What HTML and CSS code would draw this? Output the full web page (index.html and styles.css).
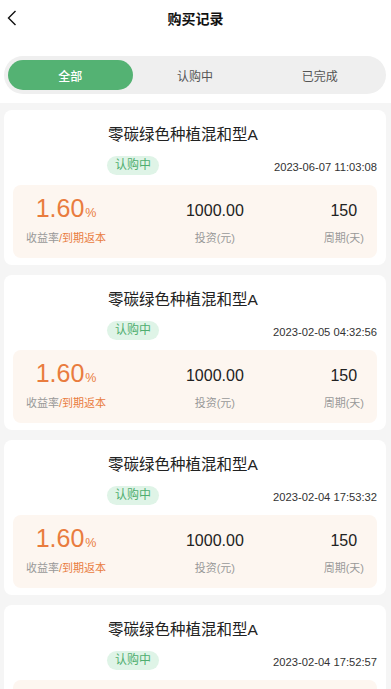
FILE: index.html
```html
<!DOCTYPE html>
<html lang="zh-CN">
<head>
  <meta charset="UTF-8" />
  <meta name="viewport" content="width=device-width, initial-scale=1.0" />
  <title>购买记录</title>
  <link rel="stylesheet" href="styles.css">
</head>
<body>

  <header>
    <div class="topbar">
      <button class="back" aria-label="返回">
        <svg width="10" height="16" viewBox="0 0 10 16"><path d="M8.5 1 L1.5 8 L8.5 15" fill="none" stroke="#111" stroke-width="1.4"/></svg>
      </button>
      <div class="title">购买记录</div>
    </div>
    <div class="tabs">
      <div class="tab active">全部</div>
      <div class="tab">认购中</div>
      <div class="tab">已完成</div>
    </div>
  </header>

  <main class="list">
    <div class="card">
      <div class="info">
        <div class="name">零碳绿色种植混和型A</div>
        <div class="meta">
          <span class="badge">认购中</span>
          <span class="date">2023-06-07 11:03:08</span>
        </div>
      </div>
      <div class="stats">
        <div class="col">
          <div class="val big">1.60<small>%</small></div>
          <div class="label">收益率<em>/到期返本</em></div>
        </div>
        <div class="col">
          <div class="val">1000.00</div>
          <div class="label">投资(元)</div>
        </div>
        <div class="col">
          <div class="val">150</div>
          <div class="label">周期(天)</div>
        </div>
      </div>
    </div>

    <div class="card">
      <div class="info">
        <div class="name">零碳绿色种植混和型A</div>
        <div class="meta">
          <span class="badge">认购中</span>
          <span class="date">2023-02-05 04:32:56</span>
        </div>
      </div>
      <div class="stats">
        <div class="col">
          <div class="val big">1.60<small>%</small></div>
          <div class="label">收益率<em>/到期返本</em></div>
        </div>
        <div class="col">
          <div class="val">1000.00</div>
          <div class="label">投资(元)</div>
        </div>
        <div class="col">
          <div class="val">150</div>
          <div class="label">周期(天)</div>
        </div>
      </div>
    </div>

    <div class="card">
      <div class="info">
        <div class="name">零碳绿色种植混和型A</div>
        <div class="meta">
          <span class="badge">认购中</span>
          <span class="date">2023-02-04 17:53:32</span>
        </div>
      </div>
      <div class="stats">
        <div class="col">
          <div class="val big">1.60<small>%</small></div>
          <div class="label">收益率<em>/到期返本</em></div>
        </div>
        <div class="col">
          <div class="val">1000.00</div>
          <div class="label">投资(元)</div>
        </div>
        <div class="col">
          <div class="val">150</div>
          <div class="label">周期(天)</div>
        </div>
      </div>
    </div>

    <div class="card">
      <div class="info">
        <div class="name">零碳绿色种植混和型A</div>
        <div class="meta">
          <span class="badge">认购中</span>
          <span class="date">2023-02-04 17:52:57</span>
        </div>
      </div>
      <div class="stats">
        <div class="col">
          <div class="val big">1.60<small>%</small></div>
          <div class="label">收益率<em>/到期返本</em></div>
        </div>
        <div class="col">
          <div class="val">1000.00</div>
          <div class="label">投资(元)</div>
        </div>
        <div class="col">
          <div class="val">150</div>
          <div class="label">周期(天)</div>
        </div>
      </div>
    </div>
  </main>

</body>
</html>
```

FILE: styles.css
```css
body {
  font-family: "Liberation Sans", "Noto Sans CJK SC", sans-serif;
  background: #f5f5f5;
  margin: 0;
  padding: 0;
  color: #222;
}

header {
  background: #ffffff;
  padding-bottom: 9px;
}

.topbar {
  height: 38px;
  display: flex;
  align-items: center;
  justify-content: center;
  position: relative;
}

.back {
  position: absolute;
  left: 6px;
  top: 10px;
  background: none;
  border: none;
  padding: 0;
  width: 12px;
  height: 16px;
}

.title {
  font-size: 14px;
  font-weight: bold;
  color: #111;
  line-height: 20px;
}

.tabs {
  margin: 18px 5px 0 4px;
  padding: 4px;
  height: 30px;
  background: #efefef;
  border-radius: 19px;
  display: flex;
}

.tab {
  flex: 1;
  display: flex;
  align-items: center;
  justify-content: center;
  font-size: 12px;
  color: #555;
  border-radius: 15px;
}

.tab.active {
  background: #54b273;
  color: #fff;
  font-weight: 500;
}

.list {
  padding: 7px 5px 0 4px;
  display: flex;
  flex-direction: column;
  gap: 10px;
}

.card {
  background: #fff;
  border-radius: 8px;
  padding: 14px 9px 7px;
}

.info {
  padding-left: 95px;
}

.name {
  font-size: 15.5px;
  line-height: 22px;
  color: #222;
}

.meta {
  margin-top: 10px;
  display: flex;
  justify-content: space-between;
  align-items: center;
}

.badge {
  display: inline-block;
  width: 52px;
  height: 19px;
  line-height: 19px;
  margin-left: -1px;
  text-align: center;
  font-size: 12px;
  color: #4fae6f;
  background: #dff4e7;
  border-radius: 10px;
}

.date {
  font-size: 11.2px;
  color: #333;
  margin-top: 2px;
}

.stats {
  margin-top: 10px;
  background: #fdf6f0;
  border-radius: 8px;
  padding: 8px 13px 12px;
  display: flex;
  justify-content: space-between;
}

.col {
  display: flex;
  flex-direction: column;
  align-items: center;
}

.val {
  height: 30px;
  font-size: 16px;
  line-height: 36px;
  color: #222;
}

.val.big {
  font-size: 25px;
  line-height: 30px;
  color: #e97c3e;
}

.val small {
  font-size: 12.5px;
  margin-left: 1px;
}

.label {
  margin-top: 7px;
  font-size: 11px;
  line-height: 16px;
  color: #999;
}

.label em {
  font-style: normal;
  color: #e97c3e;
}
```
